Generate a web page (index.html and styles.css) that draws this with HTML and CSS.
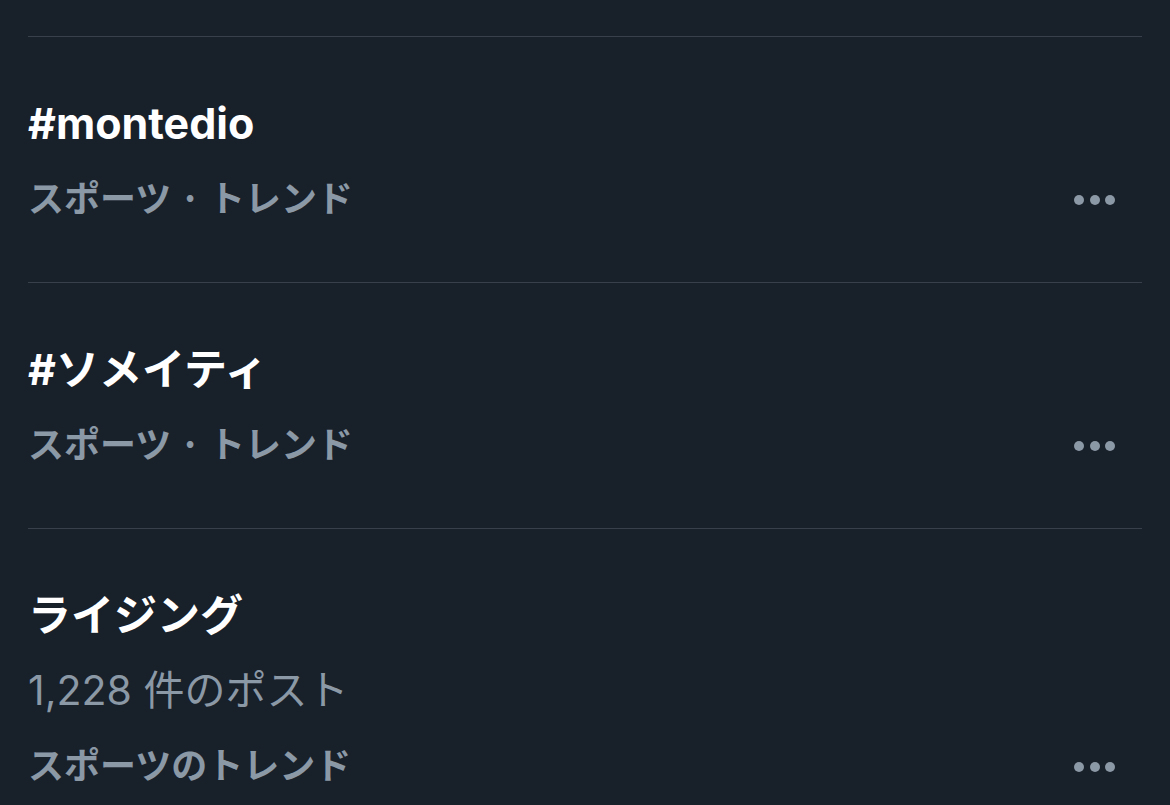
FILE: index.html
```html
<!DOCTYPE html>
<html lang="ja">
<head>
<meta charset="utf-8">
<link rel="stylesheet" href="styles.css">
</head>
<body>
<div class="list">
  <div class="trend">
    <div class="title">#montedio</div>
    <div class="row-last">
      <span class="meta strong">スポーツ · トレンド</span>
      <span class="more"><i></i><i></i><i></i></span>
    </div>
  </div>
  <div class="trend">
    <div class="title">#ソメイティ</div>
    <div class="row-last">
      <span class="meta strong">スポーツ · トレンド</span>
      <span class="more"><i></i><i></i><i></i></span>
    </div>
  </div>
  <div class="trend">
    <div class="title">ライジング</div>
    <div class="meta count">1,228 件のポスト</div>
    <div class="row-last">
      <span class="meta strong">スポーツのトレンド</span>
      <span class="more"><i></i><i></i><i></i></span>
    </div>
  </div>
</div>
</body>
</html>
```
FILE: styles.css
```css
html, body {
  margin: 0;
  padding: 0;
  background: #18202a;
  height: 100%;
  overflow: hidden;
}
body {
  font-family: Inter, "Noto Sans CJK JP", sans-serif;
  color: #ffffff;
}
.list {
  padding-top: 36px;
  margin: 0 28px;
}
.trend {
  border-top: 1px solid #38414b;
  padding: 49px 0 46px;
}
.trend:last-child {
  padding-bottom: 0;
}
.title {
  font-size: 43px;
  font-weight: 700;
  line-height: 75px;
  height: 75px;
}
.meta {
  font-family: "Noto Sans CJK JP", sans-serif;
  color: #8b98a5;
  font-size: 36px;
  line-height: 75px;
}
.strong {
  font-weight: 700;
  position: relative;
  top: -2px;
}
.count {
  font-family: Inter, "Noto Sans CJK JP", sans-serif;
  font-size: 41px;
  font-weight: 400;
  height: 75px;
}
.row-last {
  display: flex;
  justify-content: space-between;
  align-items: center;
  height: 75px;
}
.more {
  display: flex;
  gap: 5.5px;
  margin-right: 27px;
  margin-top: 2px;
}
.more i {
  display: block;
  width: 10px;
  height: 10px;
  border-radius: 50%;
  background: #8b98a5;
}
```
